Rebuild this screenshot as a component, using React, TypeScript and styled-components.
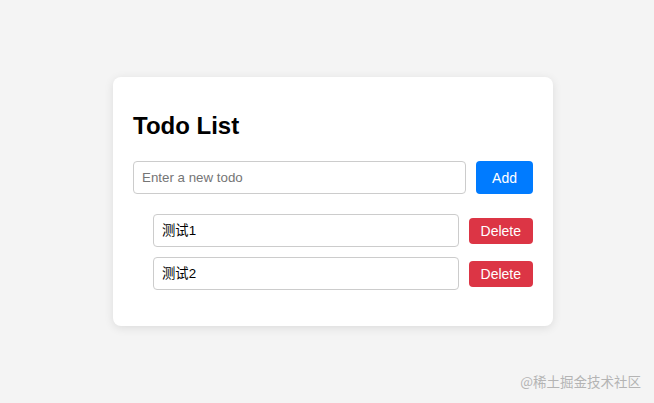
import { useState } from 'react';
import styled, { createGlobalStyle } from 'styled-components';

const GlobalStyle = createGlobalStyle`
  html, body {
    margin: 0;
    padding: 0;
    background-color: #f4f4f4;
    font-family: 'Liberation Sans', Arial, 'Noto Sans CJK SC', sans-serif;
  }
`;

const Page = styled.div`
  position: relative;
  min-height: 100vh;
  display: flex;
  justify-content: center;
  align-items: center;
  padding-left: 12px;
  box-sizing: border-box;
`;

const Card = styled.div`
  width: 440px;
  box-sizing: border-box;
  padding: 20px;
  background-color: #fff;
  border-radius: 8px;
  box-shadow: 0 2px 10px rgba(0, 0, 0, 0.1);
`;

const Title = styled.h2`
  margin: 15px 0 21px;
  font-size: 24px;
  font-weight: bold;
  color: #000;
`;

const InputRow = styled.div`
  display: flex;
  gap: 10px;
`;

const TextInput = styled.input`
  flex: 1;
  min-width: 0;
  padding: 8px;
  border: 1px solid #ccc;
  border-radius: 4px;
  font-family: 'Liberation Sans', Arial, 'Noto Sans CJK SC', sans-serif;
  font-size: 13.333px;
  line-height: 15px;
  color: #000;
  outline: none;

  ::placeholder {
    color: #757575;
  }
`;

const Button = styled.button<{ $variant: 'add' | 'delete' }>`
  border: none;
  border-radius: 4px;
  color: #fff;
  cursor: pointer;
  font-family: 'Liberation Sans', Arial, sans-serif;
  font-size: 14px;
  line-height: 16px;
  padding: ${(p) => (p.$variant === 'add' ? '8px 16px' : '5px 12px')};
  background-color: ${(p) => (p.$variant === 'add' ? '#007bff' : '#dc3545')};
`;

const List = styled.ul`
  list-style: none;
  margin: 20px 0 16px;
  padding: 0 0 0 20px;
`;

const Item = styled.li`
  display: flex;
  align-items: center;
  gap: 10px;
  margin-bottom: 10px;
`;

const Watermark = styled.div`
  position: absolute;
  right: 13px;
  bottom: 12px;
  font-family: 'Noto Sans CJK SC', sans-serif;
  font-size: 13.5px;
  color: #b4b4b4;
`;

const App = () => {
  const [todos, setTodos] = useState(['测试1', '测试2']);
  const [text, setText] = useState('');

  const addTodo = () => {
    if (!text.trim()) return;
    setTodos([...todos, text]);
    setText('');
  };

  return (
    <>
      <GlobalStyle />
      <Page>
        <Card>
          <Title>Todo List</Title>
          <InputRow>
            <TextInput
              placeholder="Enter a new todo"
              value={text}
              onChange={(e) => setText(e.target.value)}
            />
            <Button $variant="add" onClick={addTodo}>
              Add
            </Button>
          </InputRow>
          <List>
            {todos.map((todo, idx) => (
              <Item key={idx}>
                <TextInput
                  value={todo}
                  onChange={(e) =>
                    setTodos(todos.map((t, i) => (i === idx ? e.target.value : t)))
                  }
                />
                <Button
                  $variant="delete"
                  onClick={() => setTodos(todos.filter((_, i) => i !== idx))}
                >
                  Delete
                </Button>
              </Item>
            ))}
          </List>
        </Card>
        <Watermark>@稀土掘金技术社区</Watermark>
      </Page>
    </>
  );
};

export default App;
